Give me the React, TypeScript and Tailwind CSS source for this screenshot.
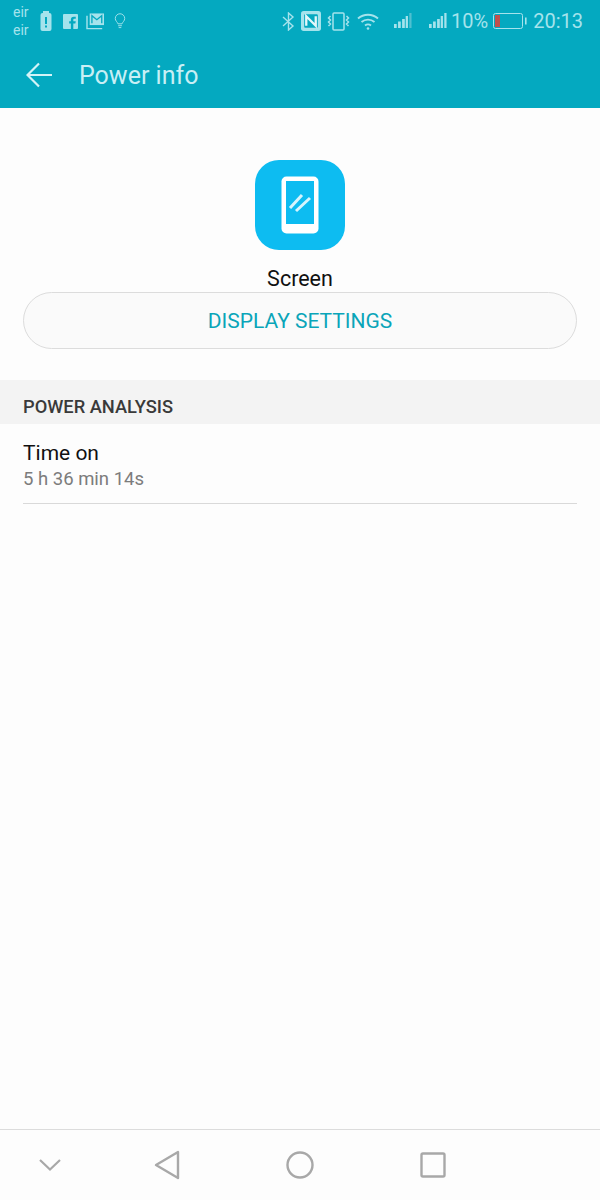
import React from "react";

function LeftIcons() {
  return (
    <div className="flex items-center">
      <svg width="14" height="20" viewBox="0 0 14 20" className="ml-[10px]">
        <rect x="4" y="0" width="6" height="3" fill="#a5e3ec" />
        <rect x="1.5" y="2" width="11" height="18" rx="2" fill="#a5e3ec" />
        <rect x="6" y="6" width="2" height="7" fill="#04a9c0" />
        <rect x="6" y="14.5" width="2" height="2" fill="#04a9c0" />
      </svg>
      <svg width="15" height="15" viewBox="0 0 16 16" className="ml-[10px]">
        <rect width="16" height="16" rx="1" fill="#a5e3ec" />
        <path d="M11 16V10h2.2l.4-2.4H11V6.2c0-.8.3-1.2 1.2-1.2h1.4V2.8h-2c-2.2 0-3.2 1.2-3.2 3.2v1.6H6.6V10h1.8v6z" fill="#04a9c0" />
      </svg>
      <svg width="21" height="17" viewBox="0 0 21 19" className="ml-[7px]">
        <rect x="4" y="0.5" width="16" height="13" fill="#a5e3ec" />
        <path d="M6.5 11.5V3l5.5 4.5L17.5 3v8.5" stroke="#04a9c0" strokeWidth="1.5" fill="none" />
        <path d="M1 3v14.5h17" stroke="#a5e3ec" strokeWidth="1.6" fill="none" />
      </svg>
      <svg width="12" height="16" viewBox="0 0 12 17" fill="none" stroke="#a5e3ec" strokeWidth="1" className="ml-[8px]">
        <path d="M3.8 11.5C3.3 9.5 1 8.5 1 5.8a5 5 0 0 1 10 0c0 2.7-2.3 3.7-2.8 5.7z" />
        <path d="M4 13.5h4M4.6 15.5h2.8" />
      </svg>
    </div>
  );
}

function Signal({ dim }: { dim?: boolean }) {
  return (
    <svg width="18" height="16" viewBox="0 0 20 16" preserveAspectRatio="none">
      <rect x="0" y="11" width="3" height="4" fill="#a5e3ec" />
      <rect x="4.5" y="8.5" width="3" height="6.5" fill="#a5e3ec" />
      <rect x="9" y="6" width="3" height="9" fill="#a5e3ec" />
      <rect x="13" y="3" width="2.5" height="12" fill="#a5e3ec" />
      <rect x="17" y="0" width="2.5" height="15" fill={dim ? "#4fc0d0" : "#a5e3ec"} />
    </svg>
  );
}

function RightIcons() {
  return (
    <div className="flex items-center text-[20px] text-[#a5e3ec]">
      <svg width="13" height="19" viewBox="0 0 13 19" fill="none" stroke="#a5e3ec" strokeWidth="1.4">
        <path d="M1 5l10 9-4.5 4V1L11 5 1 14" />
      </svg>
      <svg width="20" height="20" viewBox="0 0 19 19" className="ml-[6px]">
        <rect width="19" height="19" rx="2.5" fill="#a5e3ec" />
        <rect x="3" y="3" width="13" height="13" rx="1" fill="#04a9c0" />
        <path d="M5 14V5l9 9V5" stroke="#e3f7fa" strokeWidth="2.2" fill="none" />
      </svg>
      <svg width="25" height="19" viewBox="0 0 25 19" fill="none" stroke="#a5e3ec" strokeWidth="1.5" className="ml-[5px]">
        <rect x="7" y="1" width="11" height="17" rx="1" />
        <path d="M4.5 4l-2 2 2 2-2 2 2 2-2 2M20.5 4l2 2-2 2 2 2-2 2 2 2" />
      </svg>
      <svg width="25" height="19" viewBox="0 0 23 19" fill="none" stroke="#a5e3ec" strokeWidth="1.9" className="ml-[5px]">
        <path d="M1 6.5a15 15 0 0 1 20 0M4.5 10a10 10 0 0 1 13 0M8 13.5a5 5 0 0 1 6 0" />
        <circle cx="11" cy="16.5" r="1.3" fill="#a5e3ec" stroke="none" />
      </svg>
      <div className="ml-[13px]"><Signal dim /></div>
      <div className="ml-[17px]"><Signal /></div>
      <span className="ml-[4px] leading-none">10%</span>
      <svg width="34" height="16" viewBox="0 0 34 16" fill="none" className="ml-[5px]">
        <rect x="0.5" y="0.5" width="29" height="15" rx="2" stroke="#a5e3ec" />
        <rect x="2" y="2" width="5" height="12" fill="#c0504d" />
        <rect x="32" y="4.5" width="1.6" height="7" fill="#a5e3ec" />
      </svg>
      <span className="ml-[6px] leading-none">20:13</span>
    </div>
  );
}

export default function App() {
  return (
    <div className="flex h-[1200px] w-[600px] flex-col overflow-hidden bg-[#fdfdfd] font-['Roboto',sans-serif]">
      <header className="h-[108px] shrink-0 bg-[#04a9c0]">
        <div className="flex h-[42px] items-center justify-between pl-[13px] pr-[17px]">
          <div className="flex items-center">
            <div className="flex flex-col text-[14px] leading-[18px] text-[#a5e3ec]">
              <span>eir</span>
              <span>eir</span>
            </div>
            <LeftIcons />
          </div>
          <RightIcons />
        </div>
        <div className="flex h-[66px] items-center pl-[26px]">
          <svg width="26" height="26" viewBox="0 0 26 26" fill="none" stroke="#d4f3f7" strokeWidth="2.2">
            <path d="M26 13H2M13 1.5L1.5 13 13 24.5" />
          </svg>
          <span className="ml-[27px] pt-[2px] text-[25px] text-[#c8eff5]">Power info</span>
        </div>
      </header>

      <main className="flex flex-1 flex-col">
        <div className="flex flex-col items-center pt-[52px]">
          <div className="flex h-[90px] w-[90px] items-center justify-center rounded-[24px] bg-[#0dbcf1]">
            <svg width="38" height="58" viewBox="0 0 38 58">
              <rect width="37" height="57" x="0.5" y="0.5" rx="5" fill="#fff" />
              <rect x="5" y="5" width="28" height="43" fill="#0dbcf1" />
              <path d="M9 32L21 19M15 35L29 22" stroke="#d6f4fd" strokeWidth="3" />
            </svg>
          </div>
          <div className="mt-[17px] text-[21.5px] leading-[24px] text-[#111]">Screen</div>
          <div className="mt-[1px] flex h-[57px] w-[554px] items-center justify-center rounded-full border border-[#dcdcdc] bg-[#fafafa] pt-[3px] text-[21px] text-[#0aa5b9]">
            DISPLAY SETTINGS
          </div>
        </div>

        <div className="mt-[31px] flex h-[44px] items-end bg-[#f3f3f3] px-[23px] pb-[6px] text-[18.3px] font-medium leading-[22px] text-[#3a3a3a]">
          POWER ANALYSIS
        </div>

        <div className="mx-[23px] h-[80px] border-b border-[#d9d9d9] pt-[16px]">
          <div className="text-[21px] leading-[26px] text-[#111]">Time on</div>
          <div className="text-[18.5px] leading-[26px] text-[#7c7c7c]">5 h 36 min 14s</div>
        </div>
      </main>

      <nav className="flex h-[71px] shrink-0 items-center border-t border-[#dcdcdc] pl-[38px]">
        <svg width="24" height="14" viewBox="0 0 24 14" fill="none" stroke="#a8a8a8" strokeWidth="2.2">
          <path d="M2 2l10 9.5L22 2" />
        </svg>
        <svg width="26" height="30" viewBox="0 0 26 30" fill="none" stroke="#a8a8a8" strokeWidth="2.4" strokeLinejoin="round" className="ml-[92px]">
          <path d="M24 2v26L2 15z" />
        </svg>
        <svg width="28" height="28" viewBox="0 0 28 28" fill="none" stroke="#a8a8a8" strokeWidth="2.4" className="ml-[106px]">
          <circle cx="14" cy="14" r="12.5" />
        </svg>
        <svg width="26" height="26" viewBox="0 0 26 26" fill="none" stroke="#a8a8a8" strokeWidth="2.4" className="ml-[106px]">
          <rect x="1.5" y="1.5" width="23" height="23" rx="1.5" />
        </svg>
      </nav>
    </div>
  );
}
